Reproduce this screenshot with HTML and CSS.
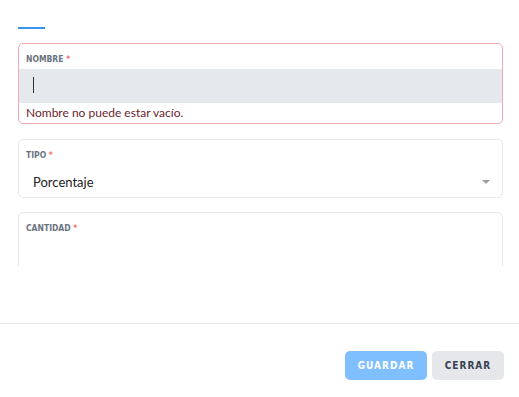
FILE: index.html
```html
<!DOCTYPE html>
<html lang="es">
<head>
    <meta charset="UTF-8">
    <meta name="viewport" content="width=device-width, initial-scale=1.0">
    <title>Descuento</title>
    <link rel="stylesheet" href="styles.css">
</head>
<body>
    <div class="dialog">
        <!-- Formulario -->
        <div class="dialog-body">
            <div class="tab-line"></div>

            <div class="field field-error">
                <label class="field-label">Nombre <span class="req">*</span></label>
                <div class="field-input"><span class="caret"></span></div>
                <div class="field-message">Nombre no puede estar vacío.</div>
            </div>

            <div class="field field-tipo">
                <label class="field-label">Tipo <span class="req">*</span></label>
                <div class="field-select">
                    <span>Porcentaje</span>
                    <span class="arrow"></span>
                </div>
            </div>

            <div class="field field-cantidad">
                <label class="field-label">Cantidad <span class="req">*</span></label>
            </div>
        </div>

        <!-- Botones -->
        <div class="dialog-footer">
            <button class="btn btn-primary">Guardar</button>
            <button class="btn btn-secondary">Cerrar</button>
        </div>
    </div>
</body>
</html>
```

FILE: styles.css
```css
* {
    margin: 0;
    padding: 0;
    box-sizing: border-box;
}

body {
    background: #fff;
    font-family: "Lato", "Noto Sans", sans-serif;
    color: #222;
}

.dialog {
    height: 397px;
    display: flex;
    flex-direction: column;
}

.dialog-body {
    height: 266px;
    overflow: hidden;
    padding: 27px 16px 0 18px;
}

.tab-line {
    width: 27px;
    height: 2px;
    background: #3b93f0;
    margin-bottom: 14px;
}

/* Campos */
.field {
    border: 1px solid #e6e8ec;
    border-radius: 5px;
    margin-bottom: 14px;
}

.field-error {
    border-color: #f4aab4;
    margin-bottom: 15px;
}

.field-label {
    display: block;
    padding: 10px 7px 0;
    height: 25px;
    font-family: "DejaVu Sans", sans-serif;
    font-stretch: condensed;
    font-size: 8.5px;
    font-weight: bold;
    text-transform: uppercase;
    color: #6b7280;
    line-height: 10px;
}

.req {
    color: #f87171;
}

.field-input {
    height: 34px;
    background: #e5e8ec;
    padding: 8px 14px;
}

.caret {
    display: block;
    width: 1px;
    height: 16px;
    background: #333;
}

.field-message {
    height: 20px;
    padding: 0 7px;
    font-size: 12px;
    line-height: 20px;
    color: #6b1d2e;
}

.field-tipo .field-label {
    height: 24px;
}

.field-select {
    display: flex;
    justify-content: space-between;
    align-items: center;
    height: 33px;
    padding: 3px 12px 0 14px;
    font-size: 13px;
}

.arrow {
    width: 0;
    height: 0;
    border-left: 4px solid transparent;
    border-right: 4px solid transparent;
    border-top: 4px solid #9e9e9e;
}

.field-cantidad {
    height: 80px;
}

/* Pie */
.dialog-footer {
    margin-top: auto;
    height: 74px;
    border-top: 1px solid #e6e6e6;
    display: flex;
    justify-content: flex-end;
    align-items: flex-start;
    gap: 5px;
    padding: 27px 15px 0 0;
}

.btn {
    height: 29px;
    border: none;
    border-radius: 5px;
    font-family: "DejaVu Sans", sans-serif;
    font-stretch: condensed;
    font-size: 10px;
    font-weight: bold;
    letter-spacing: 1px;
    text-transform: uppercase;
    cursor: pointer;
}

.btn-primary {
    width: 82px;
    background: #80bfff;
    color: #fff;
}

.btn-secondary {
    width: 72px;
    background: #e5e7eb;
    color: #374151;
}
```
